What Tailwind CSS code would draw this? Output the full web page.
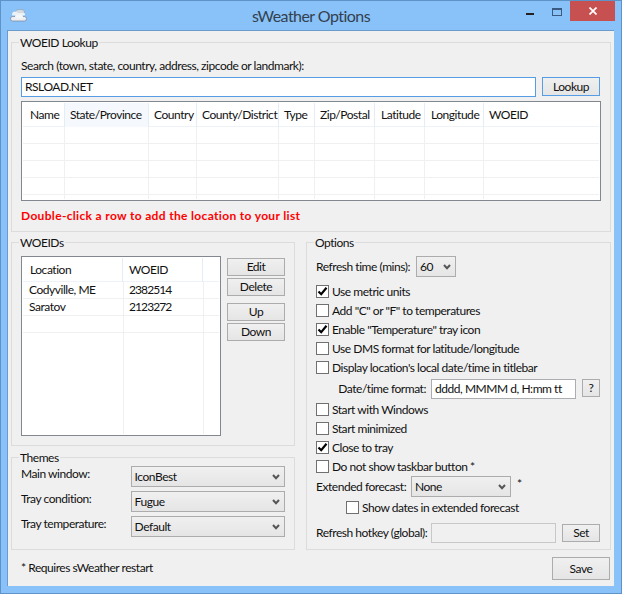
<!doctype html>
<html><head><meta charset="utf-8"><script src="https://cdn.jsdelivr.net/npm/@tailwindcss/browser@4"></script></head>
<body class="m-0 w-[622px] h-[594px] overflow-hidden bg-[#88c2f9] font-['Lato',sans-serif] text-[12px] leading-[16px] text-[#111] whitespace-nowrap tracking-[-0.46px]">
<div class="w-[622px] h-[594px] border border-[#5e93c8] flex flex-col">
  <div class="h-[29px] flex items-start relative shrink-0">
    <svg class="absolute left-[9px] top-[8px]" width="18" height="14" viewBox="0 0 18 14"><ellipse cx="10" cy="3" rx="4.500" ry="2.500" fill="#d5dbe3" stroke="#8b97a5" stroke-width=".5"/><rect x="2" y="4" width="13" height="2.500" rx="1" fill="#eef1f4"/><ellipse cx="5" cy="4" rx="2.500" ry="1.500" fill="#eef1f4"/><rect x="0.500" y="7.500" width="16" height="4.500" rx="2.200" fill="#eceff3" stroke="#79859a" stroke-width=".7"/><ellipse cx="9" cy="7.500" rx="4" ry="2" fill="#f4f6f8"/></svg>
    <div class="w-full text-center text-[#33404e] text-[16px] leading-[20px] mt-[5px] tracking-[-0.55px]">sWeather Options</div>
    <div class="absolute left-[525px] top-[12px] w-[8px] h-[2px] bg-[#222]"></div>
    <div class="absolute left-[551px] top-[7px] w-[10px] h-[8px] border border-[#3a5a80] border-t-2"></div>
    <div class="absolute left-[569px] top-0 w-[45px] h-[20px] bg-[#c75050] flex items-center justify-center">
      <svg width="8" height="8" viewBox="0 0 8 8"><path d="M.5.5l7 7M7.500.5l-7 7" stroke="#fff" stroke-width="1.700"/></svg>
    </div>
  </div>
  <div class="w-[607px] h-[556px] ml-[6px] bg-[#f0f0f0] border-t border-l border-[#6a9bcc] pl-[3px] pt-[11px] flex flex-col">
    <div class="h-[190px] border border-[#dcdcdc] px-[9px] pt-[15px] relative w-[600px] shrink-0">
      <span class="absolute left-[7px] -top-[8px] bg-[#f0f0f0] px-px">WOEID Lookup</span>
      <div class="h-[16px]">Search (town, state, country, address, zipcode or landmark):</div>
      <div class="flex gap-[6px] mt-[3px]">
        <div class="w-[515px] h-[20px] bg-white border border-[#569de5] px-[3px] leading-[18px]">RSLOAD.NET</div>
        <div class="w-[58px] h-[19px] border border-[#569de5] bg-gradient-to-b from-[#f0f0f0] to-[#e5e5e5] text-center leading-[17px]">Lookup</div>
      </div>
      <div class="mt-[4px] w-[580px] h-[100px] bg-white border border-[#828790] p-px flex flex-col">
        <div class="grid grid-cols-[42px_84px_48px_82px_36px_60px_50px_59px_1fr] h-[24px] border-b border-[#eef3f9] shrink-0 leading-[24px]">
          <div class="border-r border-[#e4ecf5] pl-[7px]">Name</div><div class="bg-[#f5f9fd] border-r border-[#e4ecf5] pl-[5px]">State/Province</div><div class="border-r border-[#e4ecf5] pl-[5px]">Country</div><div class="border-r border-[#e4ecf5] pl-[5px]">County/District</div><div class="border-r border-[#e4ecf5] pl-[5px]">Type</div><div class="border-r border-[#e4ecf5] pl-[5px]">Zip/Postal</div><div class="border-r border-[#e4ecf5] pl-[6px]">Latitude</div><div class="border-r border-[#e4ecf5] pl-[6px]">Longitude</div><div class="pl-[5px]">WOEID</div>
        </div>
        <div class="grid grid-cols-[42px_84px_48px_82px_36px_60px_50px_59px_1fr] flex-1 bg-[linear-gradient(#fff_16px,#f0f0f0_16px,#f0f0f0_17px)] bg-[length:100%_17px]">
          <div class="border-r border-[#f0f0f0]"></div><div class="border-r border-[#f0f0f0]"></div><div class="border-r border-[#f0f0f0]"></div><div class="border-r border-[#f0f0f0]"></div><div class="border-r border-[#f0f0f0]"></div><div class="border-r border-[#f0f0f0]"></div><div class="border-r border-[#f0f0f0]"></div><div class="border-r border-[#f0f0f0]"></div><div></div>
        </div>
      </div>
      <div class="mt-[7px] font-bold text-[#ff0000] leading-[16px] tracking-[0.33px]">Double-click a row to add the location to your list</div>
    </div>
    <div class="flex gap-[11px] mt-[10px] w-[600px] shrink-0">
      <div class="w-[284px] flex flex-col gap-[11px]">
        <div class="h-[204px] border border-[#dcdcdc] px-[9px] pt-[13px] relative">
          <span class="absolute left-[7px] -top-[8px] bg-[#f0f0f0] px-px">WOEIDs</span>
          <div class="flex gap-[6px]">
            <div class="w-[200px] h-[180px] bg-white border border-[#828790] p-px flex flex-col">
              <div class="grid grid-cols-[100px_80px_1fr] h-[24px] border-b border-[#eef3f9] leading-[24px] shrink-0"><div class="border-r border-[#e4ecf5] pl-[7px]">Location</div><div class="border-r border-[#e4ecf5] pl-[6px]">WOEID</div><div></div></div>
              <div class="flex flex-col flex-1 bg-[linear-gradient(90deg,transparent_100px,#f0f0f0_100px,#f0f0f0_101px,transparent_101px,transparent_180px,#f0f0f0_180px,#f0f0f0_181px,transparent_181px)]">
                <div class="h-[17px] grid grid-cols-[100px_80px_1fr] border-b border-[#f0f0f0] leading-[16px]"><div class="pl-[6px]">Codyville, ME</div><div class="pl-[6px] tracking-[-0.9px]">2382514</div></div>
                <div class="h-[17px] grid grid-cols-[100px_80px_1fr] border-b border-[#f0f0f0] leading-[16px]"><div class="pl-[6px]">Saratov</div><div class="pl-[6px] tracking-[-0.9px]">2123272</div></div>
                <div class="h-[17px] border-b border-[#f0f0f0]"></div>
              </div>
            </div>
            <div class="flex flex-col w-[58px] pt-[2px] text-center">
              <div class="h-[18px] leading-[15px] border border-[#acacac] bg-gradient-to-b from-[#f0f0f0] to-[#e5e5e5]">Edit</div>
              <div class="h-[18px] leading-[15px] mt-[2px] border border-[#acacac] bg-gradient-to-b from-[#f0f0f0] to-[#e5e5e5]">Delete</div>
              <div class="h-[18px] leading-[15px] mt-[7px] border border-[#acacac] bg-gradient-to-b from-[#f0f0f0] to-[#e5e5e5]">Up</div>
              <div class="h-[18px] leading-[15px] mt-[2px] border border-[#acacac] bg-gradient-to-b from-[#f0f0f0] to-[#e5e5e5]">Down</div>
            </div>
          </div>
        </div>
        <div class="h-[93px] border border-[#dcdcdc] px-[9px] pt-[8px] relative">
          <span class="absolute left-[7px] -top-[8px] bg-[#f0f0f0] px-px">Themes</span>
          <div class="flex flex-col gap-[4px]">
            <div class="flex items-start"><div class="w-[110px] leading-[16px]">Main window:</div>
              <div class="w-[155px] h-[21px] border border-[#acacac] bg-gradient-to-b from-[#f0f0f0] to-[#e5e5e5] pl-[3px] flex justify-between items-center"><span>IconBest</span><svg class="mr-[4px]" width="8" height="6" viewBox="0 0 8 6"><path d="M1 1l3 3.200L7 1" fill="none" stroke="#555" stroke-width="2"/></svg></div></div>
            <div class="flex items-start"><div class="w-[110px] leading-[16px]">Tray condition:</div>
              <div class="w-[155px] h-[21px] border border-[#acacac] bg-gradient-to-b from-[#f0f0f0] to-[#e5e5e5] pl-[3px] flex justify-between items-center"><span>Fugue</span><svg class="mr-[4px]" width="8" height="6" viewBox="0 0 8 6"><path d="M1 1l3 3.200L7 1" fill="none" stroke="#555" stroke-width="2"/></svg></div></div>
            <div class="flex items-start"><div class="w-[110px] leading-[16px]">Tray temperature:</div>
              <div class="w-[155px] h-[21px] border border-[#acacac] bg-gradient-to-b from-[#f0f0f0] to-[#e5e5e5] pl-[3px] flex justify-between items-center"><span>Default</span><svg class="mr-[4px]" width="8" height="6" viewBox="0 0 8 6"><path d="M1 1l3 3.200L7 1" fill="none" stroke="#555" stroke-width="2"/></svg></div></div>
          </div>
        </div>
      </div>
      <div class="w-[305px] h-[308px] border border-[#dcdcdc] px-[9px] pt-[13px] relative">
        <span class="absolute left-[7px] -top-[8px] bg-[#f0f0f0] px-px">Options</span>
        <div class="flex items-center h-[21px]"><div class="w-[100px]">Refresh time (mins):</div><div class="w-[40px] h-[21px] border border-[#acacac] bg-gradient-to-b from-[#f0f0f0] to-[#e5e5e5] pl-[3px] flex justify-between items-center"><span>60</span><svg class="mr-[4px]" width="8" height="6" viewBox="0 0 8 6"><path d="M1 1l3 3.200L7 1" fill="none" stroke="#555" stroke-width="2"/></svg></div></div>
        <div class="flex flex-col mt-[5px]">
          <div class="flex items-center h-[19px] gap-[3px]"><div class="w-[13px] h-[13px] border border-[#707070] bg-white flex items-center justify-center"><svg width="11" height="11" viewBox="0 0 11 11"><path d="M1.500 5.500l2.700 2.700L9.500 1.800" fill="none" stroke="#000" stroke-width="2.200"/></svg></div><span>Use metric units</span></div>
          <div class="flex items-center h-[19px] gap-[3px]"><div class="w-[13px] h-[13px] border border-[#707070] bg-white"></div><span>Add "C" or "F" to temperatures</span></div>
          <div class="flex items-center h-[19px] gap-[3px]"><div class="w-[13px] h-[13px] border border-[#707070] bg-white flex items-center justify-center"><svg width="11" height="11" viewBox="0 0 11 11"><path d="M1.500 5.500l2.700 2.700L9.500 1.800" fill="none" stroke="#000" stroke-width="2.200"/></svg></div><span>Enable "Temperature" tray icon</span></div>
          <div class="flex items-center h-[19px] gap-[3px]"><div class="w-[13px] h-[13px] border border-[#707070] bg-white"></div><span>Use DMS format for latitude/longitude</span></div>
          <div class="flex items-center h-[19px] gap-[3px]"><div class="w-[13px] h-[13px] border border-[#707070] bg-white"></div><span>Display location's local date/time in titlebar</span></div>
          <div class="flex items-center h-[20px] mt-[2px]"><div class="w-[115px] text-right pr-[5px]">Date/time format:</div><div class="w-[145px] h-[20px] bg-white border border-[#abadb3] pl-[3px] leading-[18px]">dddd, MMMM d, H:mm tt</div><div class="ml-[6px] w-[18px] h-[18px] border border-[#acacac] bg-gradient-to-b from-[#f0f0f0] to-[#e5e5e5] text-center leading-[16px] self-start">?</div></div>
          <div class="flex items-center h-[19px] gap-[3px] mt-[1px]"><div class="w-[13px] h-[13px] border border-[#707070] bg-white"></div><span>Start with Windows</span></div>
          <div class="flex items-center h-[19px] gap-[3px]"><div class="w-[13px] h-[13px] border border-[#707070] bg-white"></div><span>Start minimized</span></div>
          <div class="flex items-center h-[19px] gap-[3px]"><div class="w-[13px] h-[13px] border border-[#707070] bg-white flex items-center justify-center"><svg width="11" height="11" viewBox="0 0 11 11"><path d="M1.500 5.500l2.700 2.700L9.500 1.800" fill="none" stroke="#000" stroke-width="2.200"/></svg></div><span>Close to tray</span></div>
          <div class="flex items-center h-[19px] gap-[3px]"><div class="w-[13px] h-[13px] border border-[#707070] bg-white"></div><span>Do not show taskbar button *</span></div>
          <div class="flex items-center h-[21px]"><div class="w-[95px]">Extended forecast:</div><div class="w-[100px] h-[21px] border border-[#acacac] bg-gradient-to-b from-[#f0f0f0] to-[#e5e5e5] pl-[3px] flex justify-between items-center"><span>None</span><svg class="mr-[4px]" width="8" height="6" viewBox="0 0 8 6"><path d="M1 1l3 3.200L7 1" fill="none" stroke="#555" stroke-width="2"/></svg></div><span class="ml-[6px] self-start">*</span></div>
          <div class="flex items-center h-[19px] gap-[3px] pl-[30px] mt-[1px]"><div class="w-[13px] h-[13px] border border-[#707070] bg-white"></div><span>Show dates in extended forecast</span></div>
          <div class="flex items-center h-[20px] mt-[6px]"><div class="w-[115px]">Refresh hotkey (global):</div><div class="w-[125px] h-[20px] bg-[#f0f0f0] border border-[#c8c8c8]"></div><div class="ml-[6px] w-[38px] h-[18px] border border-[#acacac] bg-gradient-to-b from-[#f0f0f0] to-[#e5e5e5] text-center leading-[16px]">Set</div></div>
        </div>
      </div>
    </div>
    <div class="flex justify-between items-start w-[599px] mt-[7px] pl-[10px]">
      <div class="mt-[3px]">* Requires sWeather restart</div>
      <div class="w-[58px] h-[23px] border border-[#acacac] bg-gradient-to-b from-[#f0f0f0] to-[#e5e5e5] text-center leading-[21px]">Save</div>
    </div>
  </div>
</div>
</body></html>
